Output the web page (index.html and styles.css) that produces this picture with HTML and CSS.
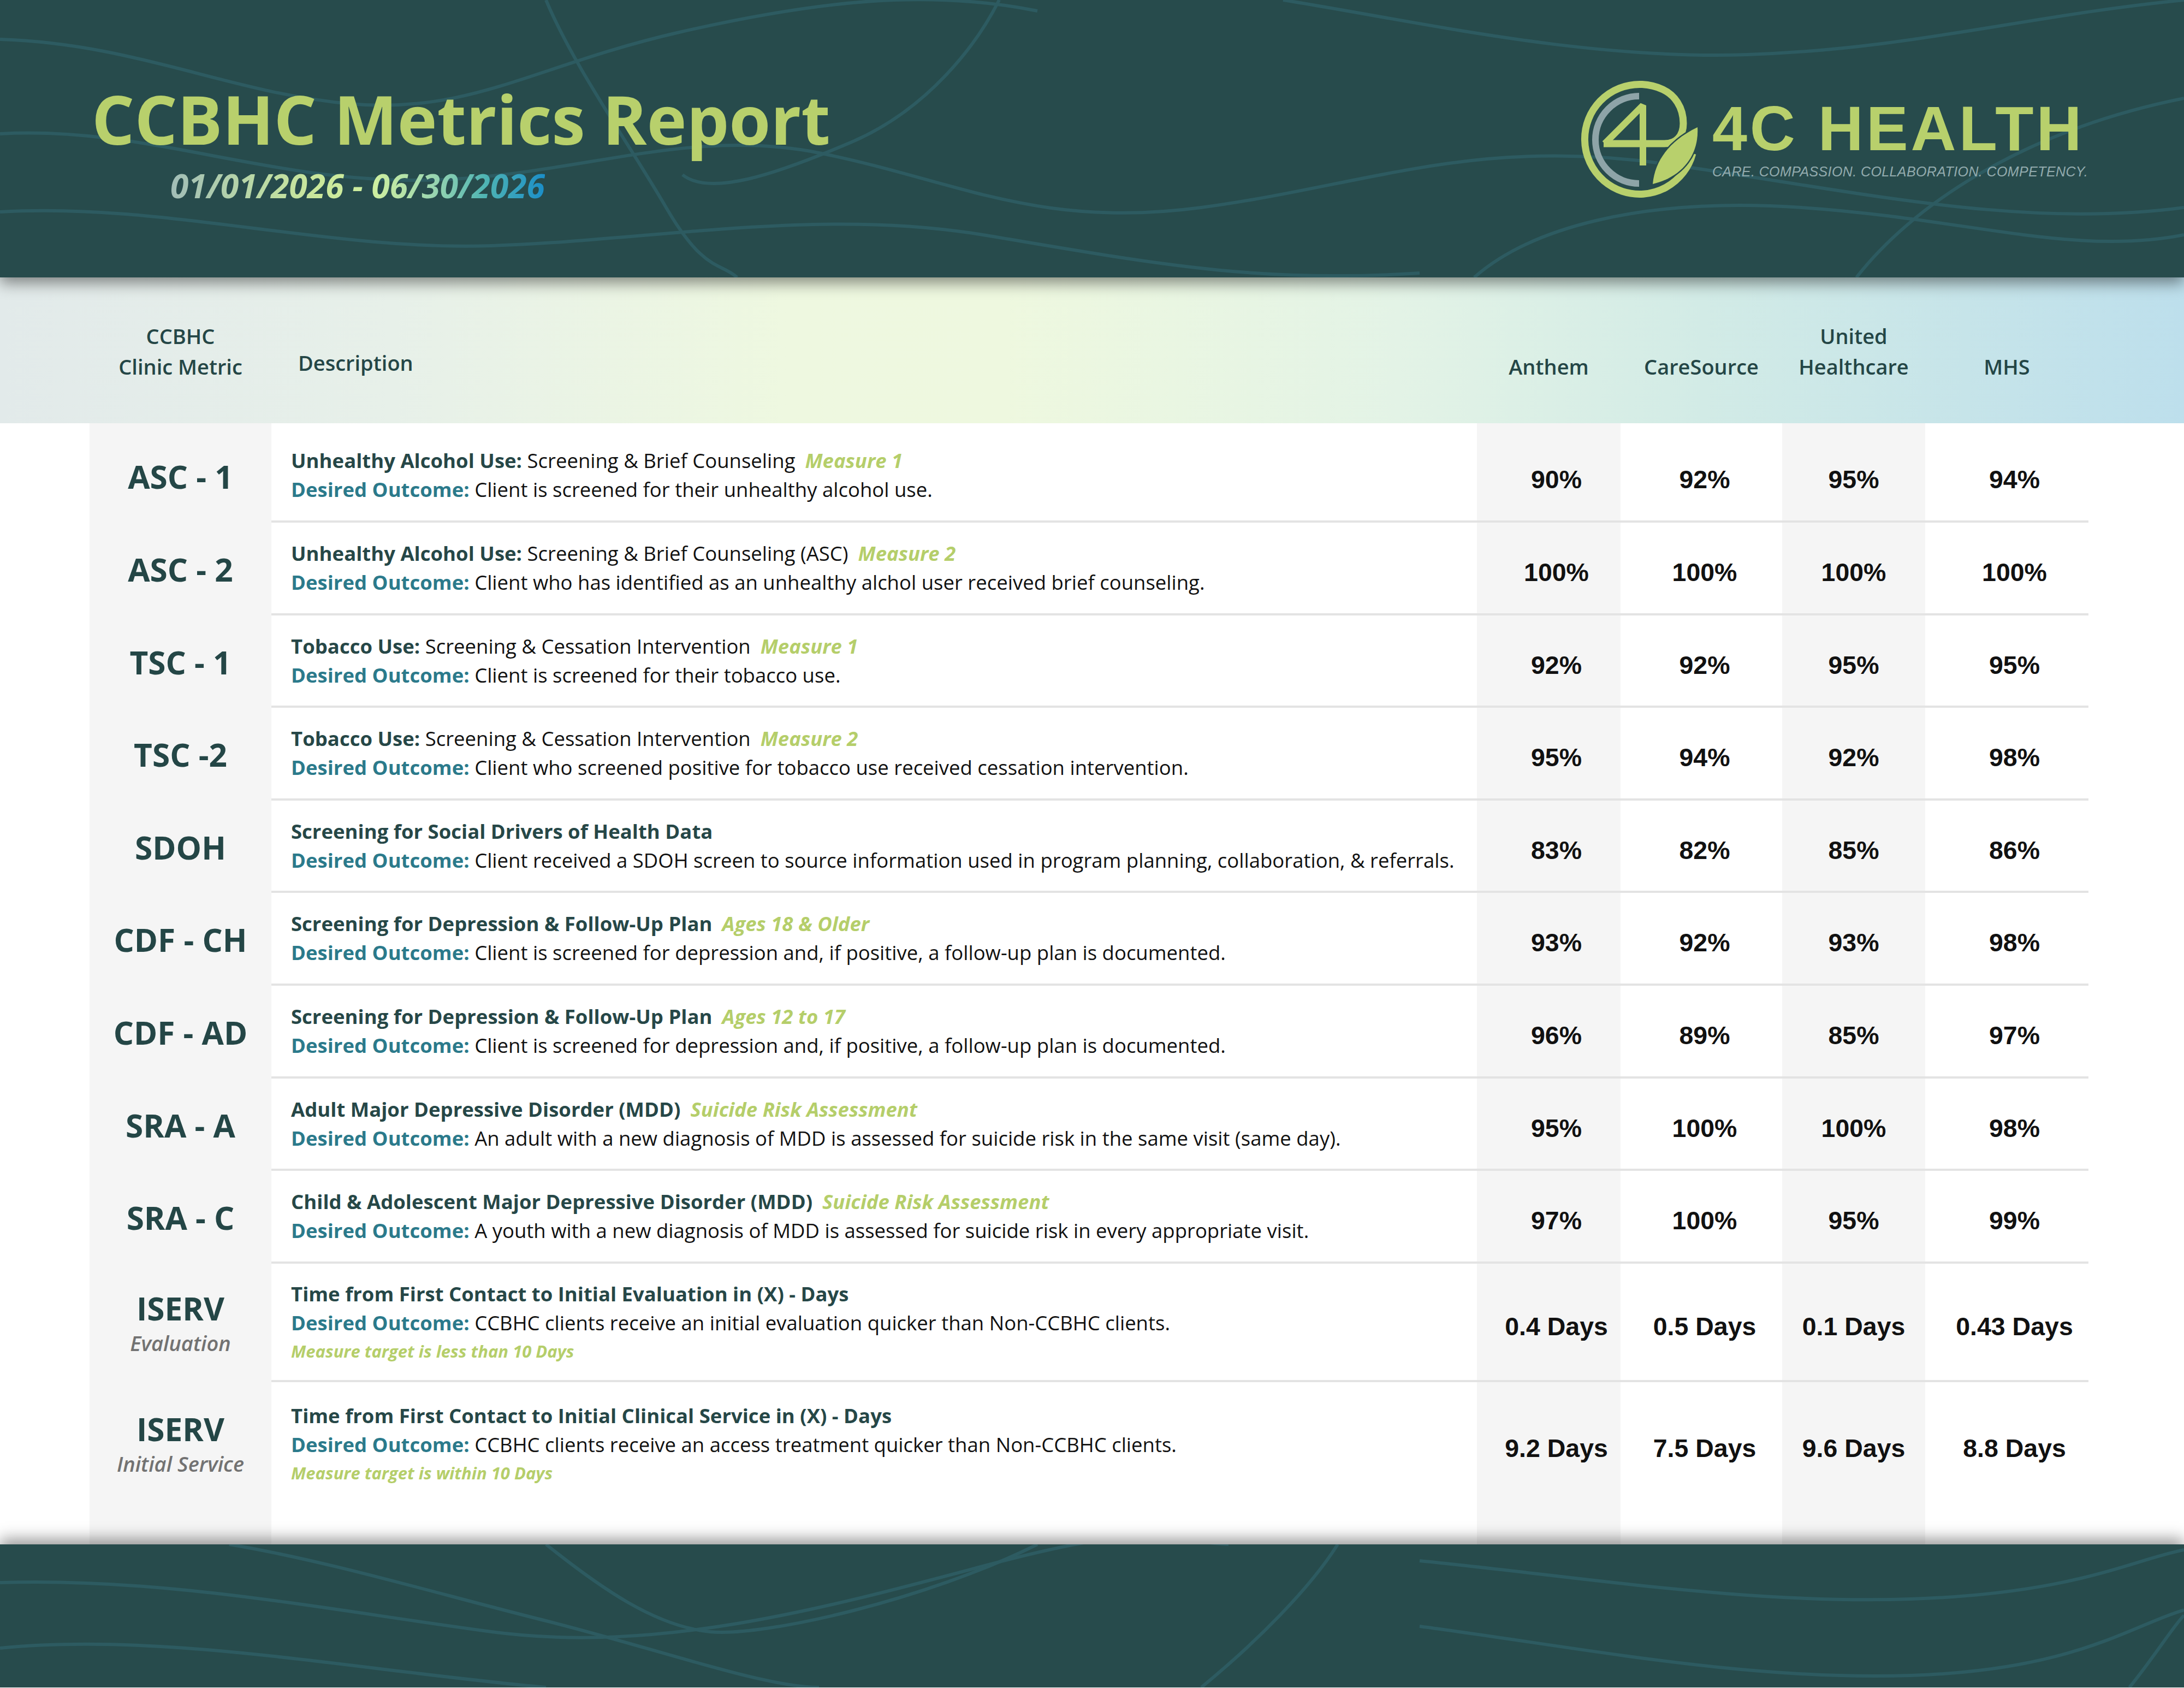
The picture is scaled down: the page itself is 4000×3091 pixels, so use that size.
FILE: index.html
```html
<!DOCTYPE html>
<html lang="en">
<head>
<meta charset="utf-8">
<title>CCBHC Metrics Report</title>
<link rel="stylesheet" href="styles.css">
</head>
<body>
<header class="top">
  <svg class="waves" viewBox="0 0 4000 508" preserveAspectRatio="none" aria-hidden="true">
    <g fill="none" stroke="#2d5b61" stroke-width="6">
      <path d="M0 72 C 250 80, 420 170, 640 190 S 980 120, 1240 60 S 1700 -20, 1900 20"/>
      <path d="M0 245 C 260 230, 480 330, 760 330 S 1250 230, 1500 280 S 1900 420, 2200 380 S 2700 250, 3050 300 S 3700 420, 4000 380"/>
      <path d="M0 388 C 300 370, 600 460, 900 450 S 1500 380, 1800 430 S 2300 520, 2600 500"/>
      <path d="M1000 0 C 1050 120, 1150 260, 1220 380 S 1320 480, 1350 508"/>
      <path d="M1830 0 C 1790 80, 1700 200, 1560 260 S 1300 360, 1250 320"/>
      <path d="M2350 0 C 2600 40, 2900 110, 3200 100 S 3700 30, 4000 0"/>
      <path d="M2700 508 C 2800 420, 3000 360, 3300 380 S 3800 470, 4000 430"/>
      <path d="M3400 508 C 3500 380, 3700 240, 4000 180"/>
    </g>
  </svg>
  <div class="title-block">
    <h1 class="title">CCBHC Metrics Report</h1>
    <div class="dates">01/01/2026 - 06/30/2026</div>
  </div>
  <div class="brand">
    <svg class="mark" viewBox="17 12 226 226" aria-hidden="true">
      <path d="M129 46 A80 80 0 0 0 129 206" fill="none" stroke="#8ea4a8" stroke-width="12"/>
      <path d="M227 151 A100.5 100.5 0 1 1 172.5 33.9 C 194 44, 210 66, 210 96 C 210 120, 196 133, 175 133 L 64 133" fill="none" stroke="#b8d06c" stroke-width="13" stroke-linejoin="round"/>
      <path d="M136 173 L136 63 L66 133" fill="none" stroke="#b8d06c" stroke-width="12" stroke-linejoin="bevel"/>
      <path d="M154 207 C 158 160, 190 125, 236 103 C 239 150, 212 193, 154 207 Z" fill="#b8d06c" stroke="#274b4c" stroke-width="5" paint-order="stroke"/>
    </svg>
    <div class="brand-text">
      <div class="brand-name">4C HEALTH</div>
      <div class="brand-tag">CARE. COMPASSION. COLLABORATION. COMPETENCY.</div>
    </div>
  </div>
</header>

<section class="thead">
  <div class="head-grid">
    <div class="th">CCBHC<br>Clinic Metric</div>
    <div class="th th-desc">Description</div>
    <div class="th">Anthem</div>
    <div class="th">CareSource</div>
    <div class="th">United<br>Healthcare</div>
    <div class="th">MHS</div>
  </div>
</section>

<main class="tbody">
  <div class="row first">
    <div class="metric"><div class="code">ASC - 1</div></div>
    <div class="desc">
      <div><b>Unhealthy Alcohol Use:</b> Screening &amp; Brief Counseling<i class="tag">Measure 1</i></div>
      <div><span class="do">Desired Outcome:</span> Client is screened for their unhealthy alcohol use.</div>
    </div>
    <div class="val shade">90%</div><div class="val">92%</div><div class="val shade">95%</div><div class="val">94%</div>
  </div>

  <div class="row">
    <div class="metric"><div class="code">ASC - 2</div></div>
    <div class="desc">
      <div><b>Unhealthy Alcohol Use:</b> Screening &amp; Brief Counseling (ASC)<i class="tag">Measure 2</i></div>
      <div><span class="do">Desired Outcome:</span> Client who has identified as an unhealthy alchol user received brief counseling.</div>
    </div>
    <div class="val shade">100%</div><div class="val">100%</div><div class="val shade">100%</div><div class="val">100%</div>
  </div>

  <div class="row">
    <div class="metric"><div class="code">TSC - 1</div></div>
    <div class="desc">
      <div><b>Tobacco Use:</b> Screening &amp; Cessation Intervention<i class="tag">Measure 1</i></div>
      <div><span class="do">Desired Outcome:</span> Client is screened for their tobacco use.</div>
    </div>
    <div class="val shade">92%</div><div class="val">92%</div><div class="val shade">95%</div><div class="val">95%</div>
  </div>

  <div class="row">
    <div class="metric"><div class="code">TSC -2</div></div>
    <div class="desc">
      <div><b>Tobacco Use:</b> Screening &amp; Cessation Intervention<i class="tag">Measure 2</i></div>
      <div><span class="do">Desired Outcome:</span> Client who screened positive for tobacco use received cessation intervention.</div>
    </div>
    <div class="val shade">95%</div><div class="val">94%</div><div class="val shade">92%</div><div class="val">98%</div>
  </div>

  <div class="row">
    <div class="metric"><div class="code">SDOH</div></div>
    <div class="desc">
      <div><b>Screening for Social Drivers of Health Data</b></div>
      <div><span class="do">Desired Outcome:</span> Client received a SDOH screen to source information used in program planning, collaboration, &amp; referrals.</div>
    </div>
    <div class="val shade">83%</div><div class="val">82%</div><div class="val shade">85%</div><div class="val">86%</div>
  </div>

  <div class="row">
    <div class="metric"><div class="code">CDF - CH</div></div>
    <div class="desc">
      <div><b>Screening for Depression &amp; Follow-Up Plan</b><i class="tag">Ages 18 &amp; Older</i></div>
      <div><span class="do">Desired Outcome:</span> Client is screened for depression and, if positive, a follow-up plan is documented.</div>
    </div>
    <div class="val shade">93%</div><div class="val">92%</div><div class="val shade">93%</div><div class="val">98%</div>
  </div>

  <div class="row">
    <div class="metric"><div class="code">CDF - AD</div></div>
    <div class="desc">
      <div><b>Screening for Depression &amp; Follow-Up Plan</b><i class="tag">Ages 12 to 17</i></div>
      <div><span class="do">Desired Outcome:</span> Client is screened for depression and, if positive, a follow-up plan is documented.</div>
    </div>
    <div class="val shade">96%</div><div class="val">89%</div><div class="val shade">85%</div><div class="val">97%</div>
  </div>

  <div class="row">
    <div class="metric"><div class="code">SRA - A</div></div>
    <div class="desc">
      <div><b>Adult Major Depressive Disorder (MDD)</b><i class="tag">Suicide Risk Assessment</i></div>
      <div><span class="do">Desired Outcome:</span> An adult with a new diagnosis of MDD is assessed for suicide risk in the same visit (same day).</div>
    </div>
    <div class="val shade">95%</div><div class="val">100%</div><div class="val shade">100%</div><div class="val">98%</div>
  </div>

  <div class="row">
    <div class="metric"><div class="code">SRA - C</div></div>
    <div class="desc">
      <div><b>Child &amp; Adolescent Major Depressive Disorder (MDD)</b><i class="tag">Suicide Risk Assessment</i></div>
      <div><span class="do">Desired Outcome:</span> A youth with a new diagnosis of MDD is assessed for suicide risk in every appropriate visit.</div>
    </div>
    <div class="val shade">97%</div><div class="val">100%</div><div class="val shade">95%</div><div class="val">99%</div>
  </div>

  <div class="row tall">
    <div class="metric"><div class="code">ISERV</div><div class="sub">Evaluation</div></div>
    <div class="desc">
      <div><b>Time from First Contact to Initial Evaluation in (X) - Days</b></div>
      <div><span class="do">Desired Outcome:</span> CCBHC clients receive an initial evaluation quicker than Non-CCBHC clients.</div>
      <div class="target">Measure target is less than 10 Days</div>
    </div>
    <div class="val shade">0.4 Days</div><div class="val">0.5 Days</div><div class="val shade">0.1 Days</div><div class="val">0.43 Days</div>
  </div>

  <div class="row last">
    <div class="metric"><div class="code">ISERV</div><div class="sub">Initial Service</div></div>
    <div class="desc">
      <div><b>Time from First Contact to Initial Clinical Service in (X) - Days</b></div>
      <div><span class="do">Desired Outcome:</span> CCBHC clients receive an access treatment quicker than Non-CCBHC clients.</div>
      <div class="target">Measure target is within 10 Days</div>
    </div>
    <div class="val shade">9.2 Days</div><div class="val">7.5 Days</div><div class="val shade">9.6 Days</div><div class="val">8.8 Days</div>
  </div>
</main>

<footer class="bottom">
  <svg class="waves" viewBox="0 0 4000 262" preserveAspectRatio="none" aria-hidden="true">
    <g fill="none" stroke="#2d5b61" stroke-width="6">
      <path d="M0 70 C 300 60, 600 120, 900 160 S 1500 120, 1800 40 S 2100 -10, 2250 0"/>
      <path d="M0 190 C 300 160, 650 230, 1000 262"/>
      <path d="M420 0 C 600 30, 800 90, 1000 140 S 1400 262, 1500 262"/>
      <path d="M1000 0 C 1100 80, 1200 150, 1300 160 S 1700 100, 1900 0"/>
      <path d="M2600 30 C 2900 60, 3200 110, 3500 100 S 3900 30, 4000 10"/>
      <path d="M2600 150 C 2900 190, 3200 250, 3500 240 S 3900 150, 4000 120"/>
      <path d="M2200 262 C 2300 180, 2400 80, 2450 0"/>
      <path d="M3900 262 C 3950 200, 3980 150, 4000 130"/>
    </g>
  </svg>
</footer>
</body>
</html>
```

FILE: styles.css
```css
html, body {
  margin: 0;
  padding: 0;
}

body {
  width: 4000px;
  background: #ffffff;
  font-family: "Open Sans", "Liberation Sans", sans-serif;
  color: #111111;
}

/* ---------- header band ---------- */
.top {
  position: relative;
  z-index: 2;
  height: 508px;
  box-sizing: border-box;
  padding: 142px 176px 0 168px;
  display: flex;
  justify-content: space-between;
  align-items: flex-start;
  background: #274b4c;
  box-shadow: 0 10px 26px rgba(0, 0, 0, 0.45);
  overflow: hidden;
}

.waves {
  position: absolute;
  left: 0;
  top: 0;
  width: 100%;
  height: 100%;
  z-index: 0;
}

.title-block,
.brand {
  position: relative;
  z-index: 1;
}

.title-block {
  margin-top: 14px;
}

.title {
  margin: 0;
  font-size: 123px;
  line-height: 123px;
  font-weight: 700;
  color: #b8d06c;
}

.dates {
  display: inline-block;
  margin: 30px 0 0 144px;
  font-size: 60.5px;
  line-height: 62px;
  font-weight: 700;
  font-style: italic;
  background: linear-gradient(90deg, #a1bdb7 0%, #b9d8a6 22%, #cbe89b 40%, #cdeea0 55%, #9bd6b0 70%, #4fb4b3 84%, #1b8ec8 100%);
  -webkit-background-clip: text;
  background-clip: text;
  color: transparent;
}

.brand {
  display: flex;
  align-items: flex-start;
  gap: 20px;
}

.mark {
  display: block;
  width: 226px;
  height: 226px;
}

.brand-text {
  margin-top: 36px;
}

.brand-name {
  font-family: "Liberation Sans", Arial, sans-serif;
  font-weight: 700;
  font-size: 115px;
  line-height: 115px;
  letter-spacing: 5px;
  color: #b8d06c;
  white-space: nowrap;
}

.brand-tag {
  margin-top: 9px;
  font-family: "Liberation Sans", Arial, sans-serif;
  font-style: italic;
  font-size: 25px;
  line-height: 25px;
  letter-spacing: 0.4px;
  color: #93abae;
  white-space: nowrap;
}

/* ---------- table head ---------- */
.thead {
  height: 267px;
  background: linear-gradient(90deg, #e2eaea 0%, #e7f0e9 18%, #eef8e0 36%, #eef8df 46%, #e3f3e6 64%, #d2ebe6 78%, #c6e4e9 90%, #bddfec 100%);
}

.head-grid {
  height: 100%;
  margin-left: 164px;
  display: grid;
  grid-template-columns: 333px 2208px 263px 296px 262px 299px;
  align-items: end;
}

.th {
  padding-bottom: 76px;
  font-size: 38px;
  line-height: 56px;
  font-weight: 600;
  color: #244646;
  text-align: center;
}

.th-desc {
  padding-left: 49px;
  padding-bottom: 83px;
  text-align: left;
}

/* ---------- table body ---------- */
.row {
  --pt: 30px;
  --pb: 29.6px;
  margin-left: 164px;
  display: grid;
  grid-template-columns: 333px 2208px 263px 296px 262px 299px;
}

.row > * {
  padding-top: var(--pt);
  padding-bottom: var(--pb);
}

.row.first {
  --pt: 42px;
  --pb: 30px;
}

.row.tall {
  --pt: 29px;
  --pb: 28px;
}

.row.last {
  --pt: 35px;
  --pb: 106px;
}

.metric {
  background: #f5f5f5;
  display: flex;
  flex-direction: column;
  align-items: center;
  justify-content: center;
}

.code {
  font-size: 58.5px;
  line-height: 64px;
  font-weight: 700;
  color: #244646;
  white-space: nowrap;
}

.sub {
  margin-top: 8px;
  font-size: 38px;
  line-height: 48px;
  font-style: italic;
  font-weight: 600;
  color: #727272;
  white-space: nowrap;
}

.desc {
  padding-left: 36px;
  border-bottom: 4px solid #e3e3e3;
  display: flex;
  flex-direction: column;
  justify-content: center;
  font-size: 36.5px;
  line-height: 53px;
  color: #111111;
  white-space: nowrap;
}

.desc b {
  font-weight: 700;
  color: #264747;
}

.do {
  font-weight: 700;
  color: #2b7a8b;
}

.tag {
  margin-left: 18px;
  font-style: italic;
  font-weight: 700;
  color: #b5ce6a;
}

.target {
  font-size: 31px;
  line-height: 50px;
  font-style: italic;
  font-weight: 700;
  color: #b5ce6a;
}

.row > .val {
  padding-top: calc(var(--pt) + 8px);
  padding-bottom: calc(var(--pb) - 8px);
  border-bottom: 4px solid #e3e3e3;
  display: flex;
  align-items: center;
  justify-content: center;
  font-family: "Liberation Sans", Arial, sans-serif;
  font-weight: 700;
  font-size: 46.5px;
  color: #111111;
  white-space: nowrap;
}

.row > .val:nth-child(3),
.row > .val:nth-child(6) {
  padding-left: 28px;
}

.row > .val:nth-child(4) {
  padding-left: 12px;
}

.val.shade {
  background: #f5f5f5;
}

.row.last > .desc,
.row.last > .val {
  border-bottom: none;
}

/* ---------- footer band ---------- */
.bottom {
  position: relative;
  z-index: 2;
  height: 262px;
  background: #274b4c;
  box-shadow: 0 -10px 26px rgba(0, 0, 0, 0.4);
  overflow: hidden;
}
```
